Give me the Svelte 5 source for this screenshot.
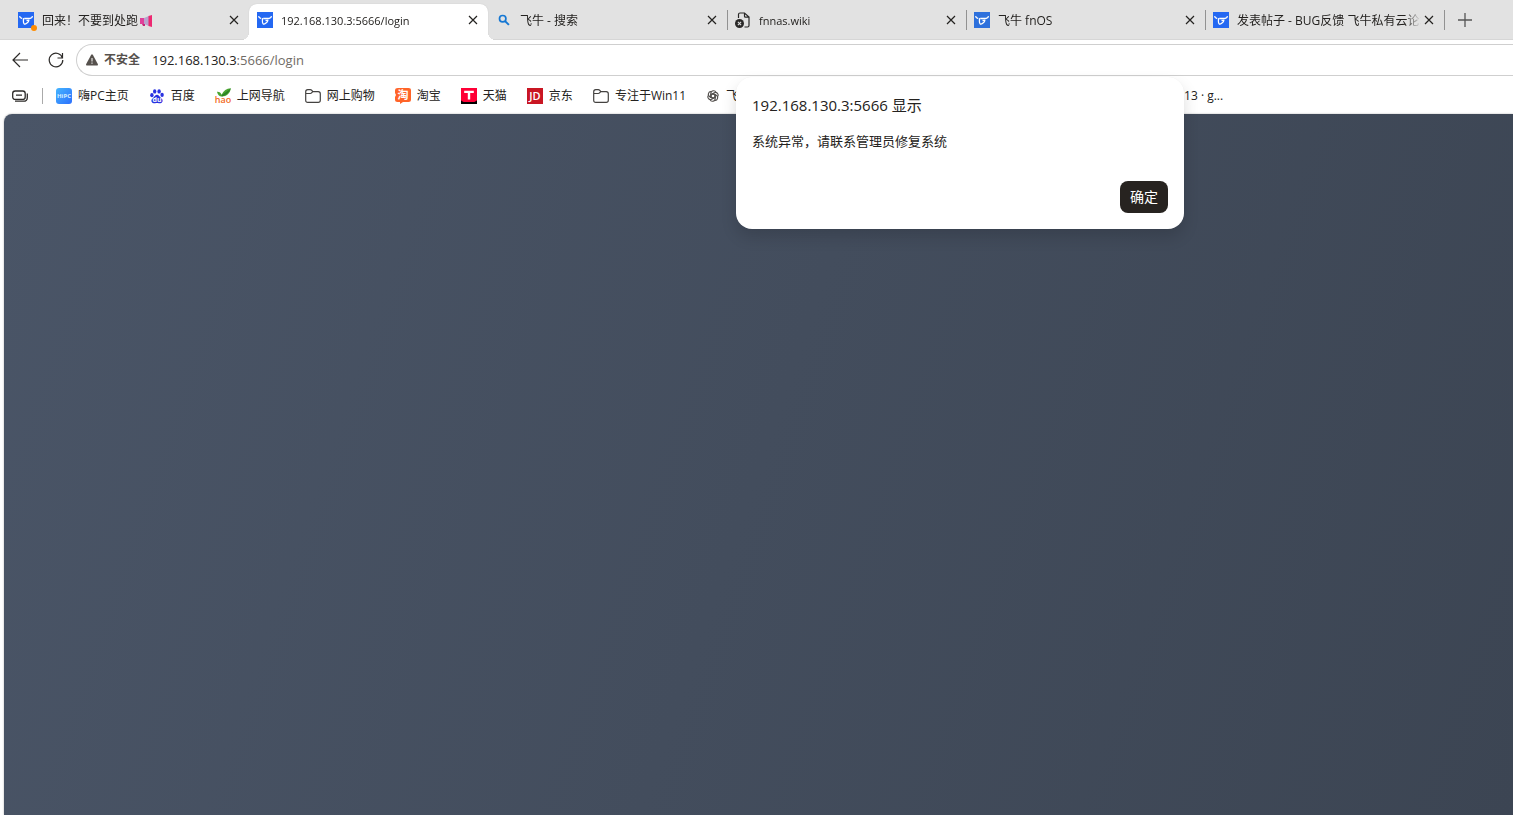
<script>
  let activeTab = $state(1);
  let address = $state('192.168.130.3:5666/login');
  let alertOpen = $state(true);

  const tabs = [
    { title: '回来！不要到处跑', icon: 'fn', badge: true, horn: true },
    { title: '192.168.130.3:5666/login', icon: 'fn', latin: true },
    { title: '飞牛 - 搜索', icon: 'search' },
    { title: 'fnnas.wiki', icon: 'broken', latin: true },
    { title: '飞牛 fnOS', icon: 'fn', muted: true },
    { title: '发表帖子 - BUG反馈 飞牛私有云论坛', icon: 'fn' }
  ];

  const bookmarks = [
    { label: '嗨PC主页', icon: 'hipc' },
    { label: '百度', icon: 'baidu' },
    { label: '上网导航', icon: 'hao' },
    { label: '网上购物', icon: 'folder' },
    { label: '淘宝', icon: 'taobao' },
    { label: '天猫', icon: 'tmall' },
    { label: '京东', icon: 'jd' },
    { label: '专注于Win11', icon: 'folder' },
    { label: '飞', icon: 'openai' }
  ];
</script>

{#snippet icon(name, muted = false)}
  <svg class="icon" viewBox="0 0 16 16" aria-hidden="true">
    {#if name === 'fn'}
      <rect width="16" height="16" fill={muted ? '#2d70dc' : '#2468f2'} />
      <path d="M1.6 4.2c.2 1.500 1 2.200 2.600 2.300M14.500 4.200c-.2 1.500-1 2.200-2.600 2.300H6.200" fill="none" stroke="#fff" stroke-width="1.300" />
      <path d="M5.600 6.200c-.3 2.300-.2 5.200.7 5.900 1.500.3 4.200-1.900 4.500-3.500.1-.4-.1-.6-.5-.5l-1.800.4" fill="none" stroke="#fff" stroke-width="1.300" />
    {:else if name === 'search'}
      <circle cx="6.700" cy="6.700" r="3.200" fill="none" stroke="#1577d3" stroke-width="1.700" />
      <path d="M9.100 9.100l3.800 3.800" stroke="#1577d3" stroke-width="2" />
    {:else if name === 'broken'}
      <path d="M3.500 6V2.500c0-1 .5-1.500 1.500-1.500h4.500L14 5v8.500c0 1-.5 1.500-1.500 1.500H9.500M9.500 1v3.200c0 .6.300.9.900.9H14" fill="none" stroke="#292827" stroke-width="1.200" />
      <circle cx="4.500" cy="11.500" r="4.500" fill="#292827" />
      <path d="M2.900 9.900l3.200 3.200M6.100 9.900l-3.200 3.200" stroke="#e2e2e2" stroke-width="1.100" />
    {:else if name === 'hipc'}
      <defs>
        <linearGradient id="hipc" x1="0" y1="0" x2="1" y2="1">
          <stop offset="0" stop-color="#45b5ff" />
          <stop offset="1" stop-color="#2c6ffc" />
        </linearGradient>
      </defs>
      <rect width="16" height="16" rx="3" fill="url(#hipc)" />
      <text x="8" y="10" class="mark" font-size="6" fill="#d9f0ff">HiPC</text>
    {:else if name === 'baidu'}
      <g fill="#2932e1">
        <ellipse cx="2.900" cy="7.200" rx="1.700" ry="2.100" />
        <ellipse cx="5.700" cy="3.400" rx="1.700" ry="2.200" />
        <ellipse cx="10.100" cy="3.400" rx="1.700" ry="2.200" />
        <ellipse cx="13.100" cy="6.900" rx="1.700" ry="2.100" />
        <path d="M8 6.800c1.700 0 2.300 1.500 3.500 2.600 1.400 1.300 2.500 2.200 2 4-.5 1.700-2.300 2-5.500 1.700-3.200.3-5 0-5.500-1.700-.5-1.800.7-2.700 2-4C5.700 8.300 6.300 6.800 8 6.800z" />
      </g>
      <text x="8" y="14" class="mark" font-size="7" fill="#fff">du</text>
    {:else if name === 'hao'}
      <path d="M2 3.800c2.400-.2 3.900 1 4.600 2.900C8.600 2.600 11.500.5 15.800.3c-.5 5.100-4.200 8.200-9 8.200C4.200 8.500 2.700 6.800 2 3.800z" fill="#48a52f" />
      <path d="M6.600 6.900C9 5.800 12.500 3.500 15.800.3 13.800 5 11 7.300 6.800 8.500z" fill="#2b8227" />
      <text x="8" y="15" class="mark thin" font-size="9" fill="#f26a1b">hao</text>
    {:else if name === 'folder'}
      <path d="M.7 12.300V3.700C.7 2.200 1.500 1.600 2.800 1.600h2.400c.8 0 1.200.3 1.600.8l1 1.200h5.400c1.400 0 2.100.7 2.100 2.100v6.600c0 1.400-.7 2.100-2.100 2.100H2.800C1.400 14.400.7 13.700.7 12.300zM.8 5.500h4.400c.8 0 1.200-.3 1.600-.8l1-1.100" fill="none" stroke="#444240" stroke-width="1.200" />
    {:else if name === 'taobao'}
      <path d="M3 0h10.500C15.300 0 16 .8 16 2.500v9c0 1.700-.8 2.500-2.500 2.500H8l-3 2v-2H2.500C.8 14 0 13.200 0 11.500V9l1-2-1-2V2.500C0 .8 1 0 3 0z" fill="#ff6428" />
      <text x="8" y="11" class="mark" font-size="11" fill="#fff">淘</text>
    {:else if name === 'tmall'}
      <rect width="16" height="16" fill="#ff0036" />
      <path d="M0 12.600c1 0 1.500 1.400 3 1.400h10c1.500 0 2-1.400 3-1.400V16H0z" fill="#000" />
      <path d="M3.200 2.800h9.600v2.100H9.200v6.600H6.800V4.900H3.200z" fill="#fff" />
    {:else if name === 'jd'}
      <rect width="16" height="16" fill="#c91623" />
      <text x="8" y="12" class="mark thin" font-size="11" fill="#fff">JD</text>
    {:else if name === 'openai'}
      <g fill="none" stroke="#55524f" stroke-width="1.300">
        {#each [0, 60, 120, 180, 240, 300] as angle}
          <path d="M5.500 9.500V5.200c0-3.600 4.800-4.300 5.800-1.400M5.700 6.700L8 5.300l3.300 1.900" transform="rotate({angle} 8 8)" />
        {/each}
      </g>
    {/if}
  </svg>
{/snippet}

<div class="browser">
  <div class="tab-strip">
    {#each tabs as tab, i}
      <div class="tab" class:active={activeTab === i} class:divided={i > 1}>
        <button class="tab-main" onclick={() => (activeTab = i)}>
          <span class="favicon">
            {@render icon(tab.icon, tab.muted)}
            {#if tab.badge}<span class="badge"></span>{/if}
          </span>
          <span class="title" class:latin={tab.latin}>
            {tab.title}{#if tab.horn}<svg class="horn" viewBox="0 0 12 12" aria-hidden="true"><path d="M0 3h4v6H0z" fill="#e0409a" /><path d="M4 3l5-2v10L4 9z" fill="#b9a3cd" /><path d="M8.500 1L12 0v12l-3.500-1z" fill="#ed2871" /><path d="M2 9h3v2H3z" fill="#c32675" /></svg>{/if}
          </span>
        </button>
        <button class="close" aria-label="关闭标签页">
          <svg viewBox="0 0 10 10"><path d="M1 1l8 8M9 1L1 9" /></svg>
        </button>
      </div>
    {/each}
    <button class="new-tab" aria-label="新建标签页">
      <svg viewBox="0 0 16 16"><path d="M8 1v14M1 8h14" /></svg>
    </button>
  </div>

  <div class="toolbar">
    <button class="nav" aria-label="后退">
      <svg viewBox="0 0 16 16"><path d="M16 8H1M8 1L1 8l7 7" /></svg>
    </button>
    <button class="nav" aria-label="刷新">
      <svg viewBox="0 0 16 16"><path d="M14.500 6A6.800 6.800 0 1 0 14.800 8M14.500 1v5h-5" /></svg>
    </button>
    <div class="address">
      <button class="security">
        <svg class="warn" viewBox="0 0 12 12" aria-hidden="true">
          <path d="M5.200.8a1 1 0 0 1 1.600 0l5 9.200c.4.800 0 1.500-.8 1.500H1c-.8 0-1.200-.7-.8-1.500z" fill="#56514d" />
          <path d="M6 4v3.500M6 8.500v1.300" stroke="#fff" stroke-width="1" />
        </svg>
        不安全
      </button>
      <label class="url">
        <span aria-hidden="true">{address.split(':')[0]}<span class="path">{address.slice(address.indexOf(':'))}</span></span>
        <input type="text" bind:value={address} aria-label="地址栏" spellcheck="false" />
      </label>
    </div>
  </div>

  <nav class="bookmarks">
    <button class="workspace" aria-label="收藏夹">
      <svg viewBox="0 0 16 16">
        <rect x=".7" y="3" width="12.500" height="8.400" rx="2.500" />
        <path d="M4 7.200h6M3 13.200h8.500c2.500 0 3.800-1.300 3.800-3.500V5.500" />
      </svg>
    </button>
    {#each bookmarks as item}
      <a class="bookmark" class:small={item.icon === 'openai'} href="#{item.icon}">
        {@render icon(item.icon)}
        <span>{item.label}</span>
      </a>
    {/each}
    <a class="bookmark overflow" href="#release">13 · g...</a>
  </nav>

  <main class="page"></main>

  {#if alertOpen}
    <div class="alert" role="alertdialog" aria-labelledby="alert-title" aria-describedby="alert-text">
      <h1 id="alert-title">192.168.130.3:5666 显示</h1>
      <p id="alert-text">系统异常，请联系管理员修复系统</p>
      <button class="confirm" onclick={() => (alertOpen = false)}>确定</button>
    </div>
  {/if}
</div>

<style>
  :global(body) {
    background: #fff;
    overflow: hidden;
  }

  .browser {
    position: relative;
    display: flex;
    flex-direction: column;
    height: 100vh;
    overflow: hidden;
    color: #242220;
    font-family: "Open Sans", "Noto Sans CJK SC", sans-serif;
    font-size: 12px;
    line-height: 16px;
  }

  button {
    padding: 0;
    border: 0;
    background: none;
    color: inherit;
    font: inherit;
    cursor: pointer;
  }

  a {
    color: inherit;
    text-decoration: none;
  }

  svg {
    display: block;
    flex: none;
    overflow: visible;
  }

  .icon {
    width: 16px;
    height: 16px;
  }

  .mark {
    font-family: "Open Sans", "Noto Sans CJK SC", sans-serif;
    font-weight: 700;
    text-anchor: middle;
  }

  .mark.thin {
    font-weight: 600;
  }

  /* Tabs */
  .tab-strip {
    display: flex;
    flex: none;
    height: 40px;
    padding-left: 10px;
    box-sizing: border-box;
    background: #e2e2e2;
    box-shadow: inset 0 -1px #d6d6d6;
  }

  .tab {
    position: relative;
    display: flex;
    align-items: center;
    flex: 0 1 239px;
    min-width: 0;
    box-sizing: border-box;
    padding: 0 8px;
  }

  .tab.divided::after {
    content: "";
    position: absolute;
    top: 10px;
    right: -1px;
    width: 1px;
    height: 20px;
    background: #929292;
  }

  .tab.active {
    align-self: flex-end;
    height: 36px;
    padding-bottom: 4px;
    border-radius: 8px 8px 0 0;
    background: #fff;
    box-shadow: 0 0 1px #bbb;
    clip-path: inset(-2px -8px 0 -8px);
  }

  .tab.active::before,
  .tab.active::after {
    content: "";
    position: absolute;
    bottom: 0;
    width: 8px;
    height: 8px;
  }

  .tab.active::before {
    left: -8px;
    background: radial-gradient(circle at 0 0, transparent 8px, #fff 8px);
  }

  .tab.active::after {
    right: -8px;
    background: radial-gradient(circle at 100% 0, transparent 8px, #fff 8px);
  }

  .tab-main {
    display: flex;
    align-items: center;
    flex: 1;
    gap: 8px;
    min-width: 0;
    text-align: left;
  }

  .favicon {
    position: relative;
    flex: none;
  }

  .badge {
    position: absolute;
    right: -3px;
    bottom: -3px;
    width: 6px;
    height: 6px;
    border-radius: 50%;
    background: #ff8c00;
  }

  .title {
    display: flex;
    align-items: center;
    flex: 1;
    padding-top: 2px;
    overflow: hidden;
    white-space: nowrap;
    mask-image: linear-gradient(to right, #000 calc(100% - 16px), transparent);
  }

  .title.latin {
    font-size: 11px;
  }

  .horn {
    width: 12px;
    height: 12px;
    margin-left: 2px;
  }

  .close {
    display: grid;
    place-items: center;
    flex: none;
    width: 16px;
    height: 24px;
    margin-right: -1px;
  }

  .close svg {
    width: 10px;
    height: 10px;
    stroke: #242220;
    stroke-width: 1.2;
  }

  .new-tab {
    display: grid;
    place-items: center;
    width: 42px;
  }

  .new-tab svg {
    width: 16px;
    height: 16px;
    stroke: #555;
    stroke-width: 1.3;
  }

  /* Address row */
  .toolbar {
    display: flex;
    flex: none;
    align-items: center;
    padding: 4px 0 4px 12px;
    gap: 20px;
  }

  .nav svg {
    width: 16px;
    height: 16px;
    fill: none;
    stroke: #2d2b29;
    stroke-width: 1.2;
  }

  .address {
    display: flex;
    align-items: center;
    flex: 1;
    height: 32px;
    margin-left: -8px;
    padding-left: 9px;
    box-sizing: border-box;
    border: 1px solid #cfcfcf;
    border-right: 0;
    border-radius: 16px 0 0 16px;
  }

  .security {
    display: flex;
    align-items: center;
    gap: 6px;
    color: #56514d;
    font-weight: 600;
  }

  .warn {
    width: 12px;
    height: 12px;
  }

  .url {
    position: relative;
    flex: 1;
    margin-left: 12px;
    font-size: 13px;
    line-height: 20px;
  }

  .path {
    color: #706b66;
  }

  /* The input lies over the two-tone text and shows only its caret */
  .url input {
    position: absolute;
    inset: 0;
    width: 100%;
    padding: 0;
    border: 0;
    outline: 0;
    background: none;
    color: transparent;
    caret-color: #242220;
    font: inherit;
  }

  /* Bookmarks */
  .bookmarks {
    display: flex;
    flex: none;
    align-items: center;
    gap: 20px;
    height: 34px;
    padding: 0 12px 2px;
    box-sizing: border-box;
    white-space: nowrap;
  }

  .workspace {
    padding-right: 14px;
    margin-right: -7px;
    border-right: 1px solid #aaa;
  }

  .workspace svg {
    width: 16px;
    height: 16px;
    fill: none;
    stroke: #2d2b29;
    stroke-width: 1.3;
  }

  .bookmark {
    display: flex;
    align-items: center;
    gap: 6px;
  }

  .bookmark.small .icon {
    width: 14px;
    height: 14px;
  }

  .bookmark.overflow {
    margin-left: 426px;
  }

  .page {
    flex: 1;
    margin-left: 4px;
    border-radius: 8px 0 0;
    background: linear-gradient(109deg, #4a5567, #3c4553);
    box-shadow: 0 0 2px #aaa;
  }

  /* Alert */
  .alert {
    position: absolute;
    top: 77px;
    left: 736px;
    display: flex;
    flex-direction: column;
    width: 448px;
    padding: 16px;
    box-sizing: border-box;
    border-radius: 16px;
    background: #fff;
    box-shadow: 0 8px 16px rgba(0, 0, 0, 0.14), 0 0 1px rgba(0, 0, 0, 0.06);
  }

  h1 {
    margin: 0;
    font-size: 15px;
    font-weight: 400;
    line-height: 24px;
  }

  .alert p {
    margin: 14px 0 30px;
    font-size: 13px;
    line-height: 20px;
  }

  .confirm {
    align-self: flex-end;
    width: 48px;
    height: 32px;
    border-radius: 8px;
    background: #272320;
    color: #fff;
    font-size: 14px;
  }
</style>
